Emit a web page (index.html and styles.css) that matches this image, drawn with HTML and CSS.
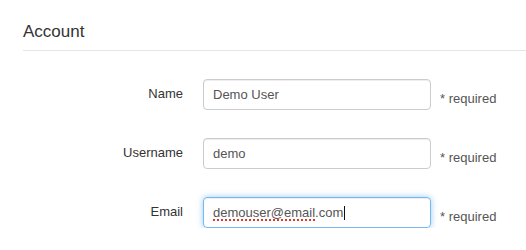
FILE: index.html
```html
<!DOCTYPE html>
<html>
<head>
<meta charset="utf-8">
<link rel="stylesheet" href="styles.css">
</head>
<body>
<div class="page">
  <div class="legend">Account</div>
  <div class="form">
    <div class="row">
      <div class="label">Name</div>
      <div class="input">Demo User</div>
      <div class="help">* required</div>
    </div>
    <div class="row">
      <div class="label">Username</div>
      <div class="input">demo</div>
      <div class="help">* required</div>
    </div>
    <div class="row">
      <div class="label">Email</div>
      <div class="input focused"><span class="misspelled">demouser@email</span>.com<span class="caret"></span></div>
      <div class="help">* required</div>
    </div>
  </div>
</div>
</body>
</html>
```
FILE: styles.css
```css
html, body {
  margin: 0;
  padding: 0;
  background: #fff;
}
body {
  font-family: "Liberation Sans", Arial, sans-serif;
  color: #333;
}
.page {
  padding: 22px 0 0 23px;
}
.legend {
  font-size: 17px;
  line-height: 20px;
  padding-bottom: 8px;
  border-bottom: 1px solid #e5e5e5;
  color: #333;
}
.form {
  display: flex;
  flex-direction: column;
  gap: 28px;
  padding-top: 28px;
}
.row {
  display: flex;
  align-items: flex-start;
  font-size: 13px;
  line-height: 18px;
}
.label {
  width: 160px;
  text-align: right;
  padding-top: 6px;
  color: #333;
}
.input {
  margin-left: 20px;
  width: 208px;
  height: 18px;
  padding: 6px 9px 5px 9px;
  border: 1px solid #ccc;
  border-radius: 4px;
  box-shadow: inset 0 1px 1px rgba(0, 0, 0, 0.075);
  color: #555;
  white-space: nowrap;
}
.input.focused {
  border-color: rgba(82, 168, 236, 0.8);
  box-shadow: inset 0 1px 1px rgba(0, 0, 0, 0.075), 0 0 6px rgba(82, 168, 236, 0.6);
}
.misspelled {
  text-decoration: underline dotted #e0392b;
  text-decoration-thickness: 2px;
  text-underline-offset: 2px;
}
.caret {
  display: inline-block;
  width: 1px;
  height: 14px;
  background: #111;
  margin-left: 1px;
  vertical-align: -3px;
}
.help {
  margin-left: 9px;
  padding-top: 11px;
  color: #555;
}
```
